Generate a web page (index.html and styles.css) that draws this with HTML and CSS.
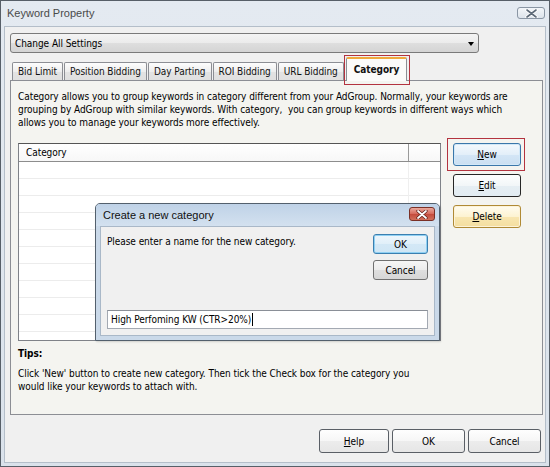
FILE: index.html
```html
<!DOCTYPE html>
<html>
<head>
<meta charset="utf-8">
<title>Keyword Property</title>
<link rel="stylesheet" href="styles.css">
</head>
<body>
<div class="window">
  <div class="titlebar">
    <span class="title">Keyword Property</span>
    <span class="win-close">
      <svg width="13" height="9" viewBox="0 0 13 9"><path d="M2 1 L11 8 M11 1 L2 8" stroke="#fff" stroke-width="3.4" stroke-linecap="round"/><path d="M2 1 L11 8 M11 1 L2 8" stroke="#5d6a78" stroke-width="1.6" stroke-linecap="round"/></svg>
    </span>
  </div>
  <div class="client">
    <div class="combo"><span>Change All Settings</span><span class="arrow"></span></div>
    <div class="tabs">
      <div class="tab">Bid Limit</div>
      <div class="tab">Position Bidding</div>
      <div class="tab">Day Parting</div>
      <div class="tab">ROI Bidding</div>
      <div class="tab">URL Bidding</div>
      <div class="tab tab-active">Category</div>
    </div>
    <div class="panel">
      <p class="desc">Category allows you to group keywords in category different from your AdGroup. Normally, your keywords are<br>grouping by AdGroup with similar keywords. With category,&nbsp; you can group keywords in different ways which<br>allows you to manage your keywords more effectively.</p>
      <div class="list-row">
        <div class="list">
          <div class="list-head">
            <div class="col1">Category</div>
            <div class="col2"></div>
          </div>
          <div class="list-body">
            <div class="col1"></div>
            <div class="col2"></div>
          </div>
        </div>
        <div class="side-btns">
          <button class="btn btn-new"><u>N</u>ew</button>
          <button class="btn btn-edit"><u>E</u>dit</button>
          <button class="btn btn-delete"><u>D</u>elete</button>
        </div>
      </div>
      <div class="tips-title">Tips:</div>
      <p class="tips">Click 'New' button to create new category. Then tick the Check box for the category you<br>would like your keywords to attach with.</p>
    </div>
    <div class="footer">
      <button class="btn btn-foot btn-help"><u>H</u>elp</button>
      <button class="btn btn-foot">OK</button>
      <button class="btn btn-foot">Cancel</button>
    </div>
  </div>

  <div class="dialog">
    <div class="dlg-title">
      <span class="dlg-title-text">Create a new category</span>
      <span class="dlg-close">
        <svg width="12" height="9" viewBox="0 0 12 9"><path d="M2 1 L10 8 M10 1 L2 8" stroke="#5a1a14" stroke-width="3.2" stroke-linecap="round"/><path d="M2 1 L10 8 M10 1 L2 8" stroke="#fff" stroke-width="1.8" stroke-linecap="round"/></svg>
      </span>
    </div>
    <div class="dlg-body">
      <div class="dlg-top">
        <div class="dlg-msg">Please enter a name for the new category.</div>
        <div class="dlg-btns">
          <button class="btn btn-ok">OK</button>
          <button class="btn btn-cancel">Cancel</button>
        </div>
      </div>
      <div class="dlg-input">High Perfoming KW (CTR&gt;20%)<span class="caret"></span></div>
    </div>
  </div>
</div>
</body>
</html>
```
FILE: styles.css
```css
* { box-sizing: border-box; }
html, body { margin: 0; padding: 0; }
body {
  width: 550px;
  height: 467px;
  overflow: hidden;
  background: #ffffff;
  font-family: "DejaVu Sans Condensed", "DejaVu Sans", sans-serif;
  font-stretch: condensed;
  font-size: 10px;
  letter-spacing: -0.06px;
  color: #000;
}
p { margin: 0; }

.window {
  position: relative;
  width: 550px;
  height: 467px;
  border: 1px solid #575f68;
  background: linear-gradient(#e4eaf1, #dae2eb);
  padding: 0 3px 3px 3px;
  display: flex;
  flex-direction: column;
}

.titlebar {
  height: 25px;
  display: flex;
  align-items: flex-start;
  justify-content: space-between;
  padding: 0 1px 0 3px;
}
.title {
  font-family: "Liberation Sans", Arial, sans-serif;
  font-stretch: normal;
  letter-spacing: 0;
  font-size: 11px;
  color: #4a4a4a;
  margin-top: 6px;
}
.win-close {
  width: 28px;
  height: 12px;
  margin-top: 6px;
  border: 1px solid #8a96a4;
  border-radius: 3px;
  background: linear-gradient(#f3f6f9, #dde4eb);
  display: flex;
  align-items: center;
  justify-content: center;
}

.client {
  flex: 1;
  background: #f0f0f0;
  border: 1px solid #b4bec9;
  display: flex;
  flex-direction: column;
}

.combo {
  margin: 6px 0 0 5px;
  width: 469px;
  height: 20px;
  border: 1px solid #7a7a7a;
  border-radius: 3px;
  background: linear-gradient(#f4f4f4, #ebebeb 50%, #dedede 51%, #d4d4d4);
  display: flex;
  align-items: center;
  justify-content: space-between;
  padding: 0 4px 0 4px;
}
.arrow {
  width: 0;
  height: 0;
  border-left: 3.5px solid transparent;
  border-right: 3.5px solid transparent;
  border-top: 4px solid #000;
  margin-top: 1px;
}

.tabs {
  margin: 2px 0 0 5px;
  height: 25px;
  display: flex;
  align-items: flex-end;
  padding-left: 2px;
  position: relative;
  z-index: 2;
}
.tab {
  height: 18px;
  margin-right: 1px;
  padding: 0 5px;
  border: 1px solid #8c8e94;
  border-bottom: none;
  border-radius: 2px 2px 0 0;
  background: linear-gradient(#fdfdfd, #eeeeee 50%, #e3e3e3 51%, #e0e0e0);
  display: flex;
  align-items: center;
  white-space: nowrap;
  color: #111;
}
.tab-active {
  position: relative;
  height: 24px;
  margin: 0 0 -1px 1px;
  padding: 0 7px 2px 7px;
  font-weight: bold;
  background: #fbfbfa;
  border-color: #8c8e94;
  border-top: 2px solid #f0a93c;
  align-items: center;
}
.tab-active::after {
  content: "";
  position: absolute;
  left: -3px;
  top: -4px;
  right: -4px;
  bottom: -4px;
  border: 1px solid #b3333f;
}

.panel {
  margin-left: 5px;
  width: 533px;
  height: 335px;
  border: 1px solid #8c8e94;
  background: #f4f4f0;
  display: flex;
  flex-direction: column;
}
.desc {
  padding: 9px 8px 0 7px;
  line-height: 13px;
  white-space: nowrap;
}
.list-row {
  margin-top: 14px;
  padding-left: 7px;
  display: flex;
  align-items: flex-start;
}
.list {
  width: 423px;
  height: 198px;
  border: 1px solid #7f8288;
  border-top-color: #555;
  background: #fff;
  display: flex;
  flex-direction: column;
}
.list-head {
  height: 18px;
  display: flex;
  border-bottom: 1px solid #8d8d8d;
  background: linear-gradient(#ffffff, #f7f7f7);
}
.list-head .col1 {
  width: 390px;
  border-right: 1px solid #9a9a9a;
  padding-left: 7px;
  display: flex;
  align-items: center;
}
.list-body {
  flex: 1;
  display: flex;
  background: repeating-linear-gradient(to bottom, #fff 0, #fff 16px, #ececec 16px, #ececec 17px);
}
.list-body .col1 {
  width: 390px;
  border-right: 1px solid #efefef;
}
.col2 { flex: 1; }

.side-btns {
  margin-left: 12px;
  display: flex;
  flex-direction: column;
  gap: 8px;
}

.btn {
  font-family: inherit;
  font-stretch: condensed;
  font-size: 10px;
  letter-spacing: -0.06px;
  color: #000;
  padding: 0;
  margin: 0;
  border: 1px solid #707070;
  border-radius: 3px;
  background: linear-gradient(#fbfbfb, #f0f0f0 50%, #e3e3e3 51%, #dcdcdc);
}
.btn u { text-decoration: underline; }

.btn-new, .btn-edit, .btn-delete {
  width: 68px;
  height: 23px;
}
.btn-new {
  position: relative;
  border-color: #3a77aa;
  background: linear-gradient(#f4f9fd, #e3eff9 50%, #d4e6f6 51%, #cadff1);
  box-shadow: inset 0 0 0 1px #d2e8f8;
}
.btn-new::after {
  content: "";
  position: absolute;
  left: -7px;
  top: -6px;
  right: -5px;
  bottom: -6px;
  border: 1px solid #b3333f;
}
.btn-edit {
  border-color: #262626;
  background: linear-gradient(#fdfefe, #f2f6f8 50%, #e6eef3 51%, #e2ecf2);
}
.btn-delete {
  border-color: #b08a35;
  background: linear-gradient(#fffcf0, #fdf3d2 50%, #f8e6b0 51%, #f4dea0);
  box-shadow: inset 0 0 0 1px #fdf3d8;
}

.tips-title {
  margin-top: 6px;
  padding-left: 7px;
  font-weight: bold;
  line-height: 13px;
}
.tips {
  margin-top: 7px;
  padding-left: 7px;
  line-height: 13px;
  white-space: nowrap;
}

.footer {
  margin-top: 14px;
  padding-right: 4px;
  display: flex;
  justify-content: flex-end;
  gap: 3px;
}
.btn-foot {
  width: 73px;
  height: 24px;
  border-color: #5a5f66;
  background: linear-gradient(#fefefe, #f6f6f6 50%, #ececec 51%, #e6e6e6);
}
.btn-help { width: 70px; }

/* Modal dialog window floating over the list */
.dialog {
  position: absolute;
  left: 94px;
  top: 202px;
  width: 345px;
  height: 138px;
  border: 1px solid #53606d;
  border-radius: 5px 5px 0 0;
  background: #cad9e9;
  display: flex;
  flex-direction: column;
  z-index: 5;
  box-shadow: 1px 1px 2px rgba(0,0,0,0.15);
}
.dlg-title {
  height: 22px;
  display: flex;
  justify-content: space-between;
  align-items: flex-start;
  padding: 0 4px 0 7px;
  background: linear-gradient(#bfd2e7, #d3e1ef);
  border-radius: 4px 4px 0 0;
}
.dlg-title-text {
  font-family: "Liberation Sans", Arial, sans-serif;
  font-stretch: normal;
  letter-spacing: 0;
  font-size: 11px;
  color: #111;
  margin-top: 5px;
}
.dlg-close {
  margin-top: 3px;
  width: 26px;
  height: 14px;
  border: 1px solid #7a3026;
  border-radius: 3px;
  background: linear-gradient(#e9a99d, #d6685a 50%, #c44a3b 51%, #d0705c);
  display: flex;
  align-items: center;
  justify-content: center;
}
.dlg-body {
  flex: 1;
  margin: 0 4px 4px 4px;
  background: #f0f0f0;
  border: 1px solid #a9b8c8;
  padding: 7px 6px 0 6px;
  display: flex;
  flex-direction: column;
}
.dlg-top {
  display: flex;
  justify-content: space-between;
  align-items: flex-start;
}
.dlg-msg {
  line-height: 13px;
  margin-top: 1px;
}
.dlg-btns {
  display: flex;
  flex-direction: column;
  gap: 6px;
}
.btn-ok, .btn-cancel {
  width: 55px;
  height: 20px;
}
.btn-ok {
  border-color: #3b7fb0;
  background: linear-gradient(#eef6fc, #e0eff9 50%, #d3e8f6 51%, #d0e6f5);
  box-shadow: inset 0 0 0 1px #8fd0f3;
}
.btn-cancel {
  border-color: #707070;
  background: linear-gradient(#f6f6f6, #ececec 50%, #dfdfdf 51%, #d6d6d6);
}
.dlg-input {
  margin-top: 30px;
  height: 19px;
  border: 1px solid #a3a9b2;
  border-top-color: #8a8f97;
  background: #fff;
  padding-left: 3px;
  display: flex;
  align-items: center;
  white-space: nowrap;
}
.caret {
  display: inline-block;
  width: 1px;
  height: 13px;
  background: #000;
  margin-left: 1px;
}
```
